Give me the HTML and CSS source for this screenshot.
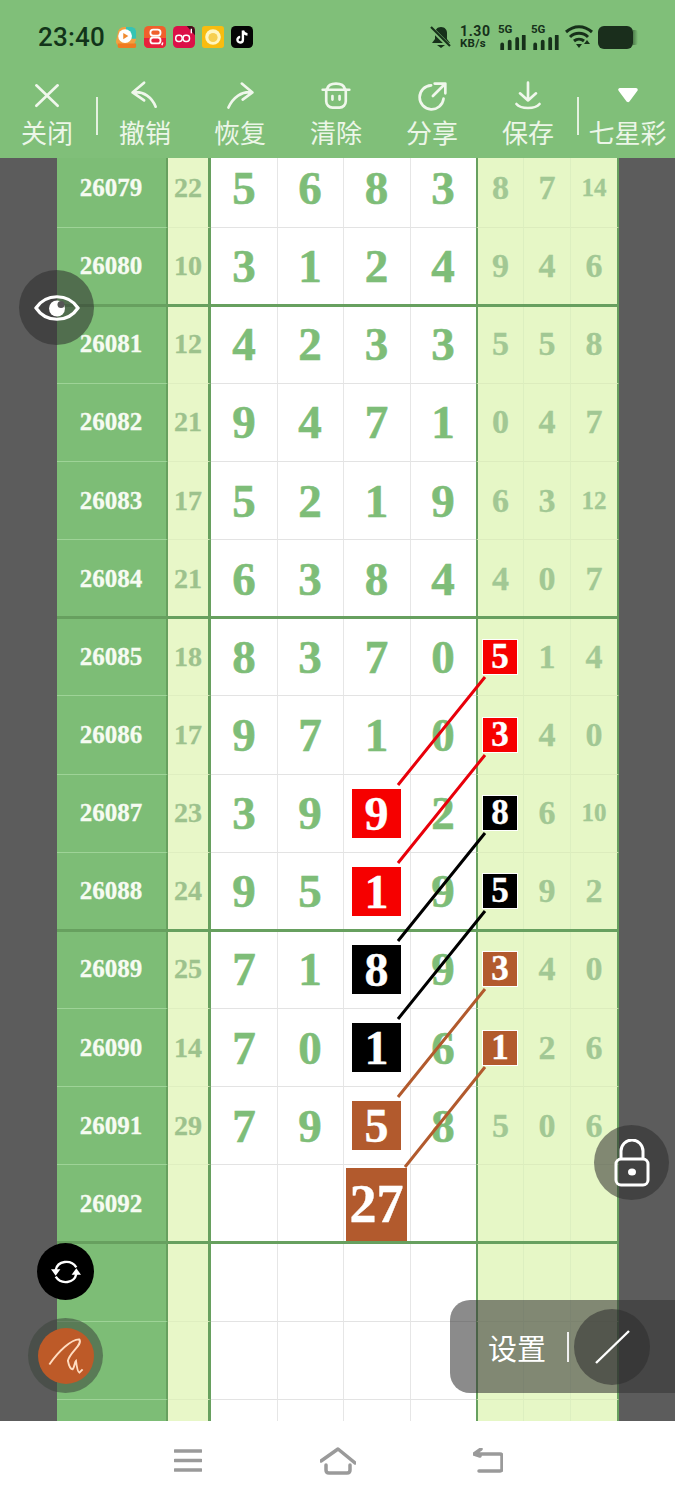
FILE: index.html
```html
<!DOCTYPE html>
<html lang="zh">
<head>
<meta charset="utf-8">
<title>七星彩</title>
<link rel="stylesheet" href="styles.css">
</head>
<body>
<div class="screen">
  <header class="head">
    <div class="status">
      <span class="time">23:40</span>
      <div class="apps">
        <svg class="app" viewBox="0 0 24 24"><path d="M3 8a7 7 0 0 1 7-7h8a5 5 0 0 1 5 5v8a8 8 0 0 1-2 5l2 3H6a5 5 0 0 1-5-5z" fill="#f3a040"/><path d="M12 1h6a5 5 0 0 1 5 5v8H12z" fill="#35c4b4"/><circle cx="11" cy="11" r="7.500" fill="#fff"/><path d="M9 7.500l5.500 3.500L9 14.500z" fill="#f08a30"/><path d="M3 19h20v3a2 2 0 0 1-2 2H5a2 2 0 0 1-2-2z" fill="#f07a20"/></svg>
        <svg class="app" viewBox="0 0 24 24"><rect width="24" height="24" rx="5" fill="#f0602c"/><path d="M0 13h24v6a5 5 0 0 1-5 5H5a5 5 0 0 1-5-5z" fill="#e8203c"/><rect x="7" y="4" width="11" height="6.500" rx="3" fill="none" stroke="#fff" stroke-width="2"/><rect x="7" y="12.500" width="11" height="6.500" rx="3" fill="none" stroke="#fff" stroke-width="2"/><path d="M20.500 18l-1 3" stroke="#fff" stroke-width="1.600"/></svg>
        <svg class="app" viewBox="0 0 24 24"><rect width="24" height="24" rx="5" fill="#dc1048"/><path d="M15 0h4a5 5 0 0 1 5 5v5z" fill="#40101c"/><rect x="3" y="10" width="7" height="7" rx="3" fill="none" stroke="#fff" stroke-width="1.600"/><rect x="11" y="10" width="7" height="7" rx="3" fill="none" stroke="#fff" stroke-width="1.600"/><path d="M20 3v5" stroke="#fff" stroke-width="1.500"/></svg>
        <svg class="app" viewBox="0 0 24 24"><rect width="24" height="24" rx="3" fill="#f8bc10"/><circle cx="12" cy="12" r="8.500" fill="#fff6c0"/><circle cx="12" cy="12.500" r="5" fill="#f6cf50"/></svg>
        <svg class="app" viewBox="0 0 24 24"><rect width="24" height="24" rx="5" fill="#050505"/><path d="M13 5v10a3 3 0 1 1-3-3M13 5c.5 2.500 2 4 5 4.300" fill="none" stroke="#fff" stroke-width="2.600"/></svg>
      </div>
      <div class="sys">
        <svg class="bell" viewBox="0 0 22 24"><path d="M11 2C7 2 5 5 5 8v6l-3 4h18l-3-4V8c0-3-2-6-6-6zM7 20h8l-4 3z" fill="#16301a"/><path d="M1 3l19 19" stroke="#80bf79" stroke-width="4.500"/><path d="M1 2l19 19" stroke="#16301a" stroke-width="2.200"/></svg>
        <div class="rate"><span class="rate-num">1.30</span><span class="rate-unit">KB/s</span></div>
        <div class="net"><span class="g5">5G</span><svg class="bars" viewBox="0 0 28 16"><path d="M1 10a1.500 1.500 0 0 1 4 0v6H1zM9 7a1.500 1.500 0 0 1 4 0v9H9zM17 4a1.500 1.500 0 0 1 4 0v12h-4zM24 1a1.500 1.500 0 0 1 4 0v15h-4z" fill="#16301a"/></svg></div>
        <div class="net"><span class="g5">5G</span><svg class="bars" viewBox="0 0 28 16"><path d="M1 10a1.500 1.500 0 0 1 4 0v6H1zM9 7a1.500 1.500 0 0 1 4 0v9H9zM17 4a1.500 1.500 0 0 1 4 0v12h-4zM24 1a1.500 1.500 0 0 1 4 0v15h-4z" fill="#16301a"/></svg></div>
        <svg class="wifi" viewBox="0 0 28 24"><path d="M1 7c8-7 18-7 26 0M5 12c5-5 13-5 18 0M9 16c3-2.500 7-2.500 10 0" fill="none" stroke="#16301a" stroke-width="3"/><path d="M11 19h6l-3 4z" fill="#16301a"/><path d="M22 15l3 4h-6z" fill="#16301a"/></svg>
        <div class="batt"><span class="batt-fill"></span><span class="batt-tip"></span></div>
      </div>
    </div>
    <nav class="tools">
      <div class="tool"><svg class="ti" viewBox="0 0 36 36"><path d="M6 6l24 23M30 6L6 29"/></svg><span>关闭</span></div>
      <div class="tool sep-l"><svg class="ti" viewBox="0 0 36 36"><path d="M17 3L4 14l13 9M4 14c13-2 22 6 26 16"/></svg><span>撤销</span></div>
      <div class="tool"><svg class="ti" viewBox="0 0 36 36"><path d="M20 4l12 10-11 8M32 14C20 12 10 20 5 31"/></svg><span>恢复</span></div>
      <div class="tool"><svg class="ti" viewBox="0 0 36 36"><path d="M7 11v13a7 7 0 0 0 7 7h8a7 7 0 0 0 7-7V11"/><path d="M3 11h30M8 10c2-8 18-8 20 0M14 18v4M22 18v4"/></svg><span>清除</span></div>
      <div class="tool"><svg class="ti" viewBox="0 0 36 36"><path d="M17 6a13.500 13.500 0 1 0 14 15"/><path d="M21 4h12v11M32 5L19 18"/></svg><span>分享</span></div>
      <div class="tool"><svg class="ti" viewBox="0 0 36 36"><path d="M18 3v20M9 15l9 8 9-8M5 27c5 6 21 6 26 0"/></svg><span>保存</span></div>
      <div class="tool sep-r"><svg class="ti" viewBox="0 0 36 36"><path class="solid" d="M9 11h18l-9 12z"/></svg><span>七星彩</span></div>
    </nav>
  </header>

  <main class="board">
    <div class="rows">
      <div class="row"><b class="id">26079</b><i class="sum">22</i><em class="d">5</em><em class="d">6</em><em class="d">8</em><em class="d">3</em><s class="r">8</s><s class="r">7</s><s class="r sm">14</s></div>
      <div class="row end"><b class="id">26080</b><i class="sum">10</i><em class="d">3</em><em class="d">1</em><em class="d">2</em><em class="d">4</em><s class="r">9</s><s class="r">4</s><s class="r">6</s></div>
      <div class="row"><b class="id">26081</b><i class="sum">12</i><em class="d">4</em><em class="d">2</em><em class="d">3</em><em class="d">3</em><s class="r">5</s><s class="r">5</s><s class="r">8</s></div>
      <div class="row"><b class="id">26082</b><i class="sum">21</i><em class="d">9</em><em class="d">4</em><em class="d">7</em><em class="d">1</em><s class="r">0</s><s class="r">4</s><s class="r">7</s></div>
      <div class="row"><b class="id">26083</b><i class="sum">17</i><em class="d">5</em><em class="d">2</em><em class="d">1</em><em class="d">9</em><s class="r">6</s><s class="r">3</s><s class="r sm">12</s></div>
      <div class="row end"><b class="id">26084</b><i class="sum">21</i><em class="d">6</em><em class="d">3</em><em class="d">8</em><em class="d">4</em><s class="r">4</s><s class="r">0</s><s class="r">7</s></div>
      <div class="row"><b class="id">26085</b><i class="sum">18</i><em class="d">8</em><em class="d">3</em><em class="d">7</em><em class="d">0</em><s class="r"><u class="bs red">5</u></s><s class="r">1</s><s class="r">4</s></div>
      <div class="row"><b class="id">26086</b><i class="sum">17</i><em class="d">9</em><em class="d">7</em><em class="d">1</em><em class="d">0</em><s class="r"><u class="bs red">3</u></s><s class="r">4</s><s class="r">0</s></div>
      <div class="row"><b class="id">26087</b><i class="sum">23</i><em class="d">3</em><em class="d">9</em><em class="d"><u class="bm red">9</u></em><em class="d">2</em><s class="r"><u class="bs blk">8</u></s><s class="r">6</s><s class="r sm">10</s></div>
      <div class="row end"><b class="id">26088</b><i class="sum">24</i><em class="d">9</em><em class="d">5</em><em class="d"><u class="bm red">1</u></em><em class="d">9</em><s class="r"><u class="bs blk">5</u></s><s class="r">9</s><s class="r">2</s></div>
      <div class="row"><b class="id">26089</b><i class="sum">25</i><em class="d">7</em><em class="d">1</em><em class="d"><u class="bm blk">8</u></em><em class="d">9</em><s class="r"><u class="bs brn">3</u></s><s class="r">4</s><s class="r">0</s></div>
      <div class="row"><b class="id">26090</b><i class="sum">14</i><em class="d">7</em><em class="d">0</em><em class="d"><u class="bm blk">1</u></em><em class="d">6</em><s class="r"><u class="bs brn">1</u></s><s class="r">2</s><s class="r">6</s></div>
      <div class="row"><b class="id">26091</b><i class="sum">29</i><em class="d">7</em><em class="d">9</em><em class="d"><u class="bm brn">5</u></em><em class="d">8</em><s class="r">5</s><s class="r">0</s><s class="r">6</s></div>
      <div class="row end"><b class="id">26092</b><i class="sum"></i><em class="d"></em><em class="d"></em><em class="d"><u class="bl brn">27</u></em><em class="d"></em><s class="r"></s><s class="r"></s><s class="r"></s></div>
      <div class="row"><b class="id"></b><i class="sum"></i><em class="d"></em><em class="d"></em><em class="d"></em><em class="d"></em><s class="r"></s><s class="r"></s><s class="r"></s></div>
      <div class="row"><b class="id"></b><i class="sum"></i><em class="d"></em><em class="d"></em><em class="d"></em><em class="d"></em><s class="r"></s><s class="r"></s><s class="r"></s></div>
      <div class="row"><b class="id"></b><i class="sum"></i><em class="d"></em><em class="d"></em><em class="d"></em><em class="d"></em><s class="r"></s><s class="r"></s><s class="r"></s></div>
    </div>
    <svg class="links" viewBox="0 158 675 1263">
      <path class="l-red" d="M485 677L398 785M485 755L398 863"/>
      <path class="l-blk" d="M485 833L398 941M485 911L398 1019"/>
      <path class="l-brn" d="M485 989L398 1097M485 1067L405 1167"/>
    </svg>
  </main>

  <footer class="nav">
    <svg class="nv-menu" viewBox="0 0 28 24"><path d="M1 3h26M1 12.500h26M1 22h26"/></svg>
    <svg class="nv-home" viewBox="0 0 36 28"><path d="M1 14L18 2l17 14M6 18v5q0 3 3 3h18q3 0 3-3v-5"/></svg>
    <svg class="nv-back" viewBox="0 0 30 26"><path d="M1 6h26q2 0 2 2v13q0 2-2 2H6M8 1L1 6l6 2"/></svg>
  </footer>

  <div class="fab eye"><svg viewBox="0 0 46 32"><path d="M2 16C12 1 34 1 44 16 34 31 12 31 2 16z" fill="none" stroke="#fff" stroke-width="3.200"/><circle cx="23" cy="16.500" r="8" fill="#fff"/><circle cx="27" cy="12.500" r="3.500" fill="#555"/></svg></div>
  <div class="fab lock"><svg viewBox="0 0 36 48"><path d="M7 20V12a11 11 0 0 1 22 0v8" fill="none" stroke="#fff" stroke-width="3"/><rect x="2" y="20" width="32" height="26" rx="5" fill="none" stroke="#fff" stroke-width="3"/><ellipse cx="18" cy="33" rx="4" ry="3.500" fill="#fff"/></svg></div>
  <div class="sync"><svg viewBox="0 0 32 32"><path d="M5 14C7 4 21 2 27 11M27 18C25 28 11 30 5 21" fill="none" stroke="#fff" stroke-width="2.600"/><path d="M0 13l10 0-5 7zM32 19l-10 0 5-7z" fill="#fff"/></svg></div>
  <div class="pen"><span class="pen-in"><svg viewBox="0 0 40 40"><path d="M2.500 29C12 15 26 2 34 2.500 38 8 24 16 22 25 23 30 25 34 27 34 29 32 29 26 30.500 25 31 29 32 37 34 37.500L37.500 34" fill="none" stroke="#ffdcc0" stroke-width="2"/></svg></span></div>
  <div class="panel">
    <span class="panel-txt">设置</span>
    <span class="panel-bar"></span>
    <span class="panel-btn"><svg viewBox="0 0 36 36"><path d="M2 34L35 2" stroke="#fff" stroke-width="2.400"/></svg></span>
  </div>
</div>
</body>
</html>
```
FILE: styles.css
```css
* { box-sizing: border-box; }
html, body { margin: 0; padding: 0; background: #fff; }
.screen {
  position: relative;
  width: 675px;
  height: 1500px;
  overflow: hidden;
  display: flex;
  flex-direction: column;
  font-family: "Noto Sans CJK SC", "Noto Sans", sans-serif;
}

/* header */
.head { height: 158px; background: #80bf79; flex: none; }
.status { height: 74px; display: flex; align-items: center; padding: 0 37px 0 38px; }
.time { font: 500 26px/1 Roboto, sans-serif; color: #12341a; letter-spacing: .2px; width: 77px; }
.apps { display: flex; gap: 7px; }
.app { width: 22px; height: 22px; display: block; }
.sys { margin-left: auto; display: flex; align-items: center; }
.bell { width: 22px; height: 24px; margin-right: 8px; }
.rate { display: flex; flex-direction: column; width: 32px; color: #16301a; font-family: Roboto, sans-serif; font-weight: 700; line-height: 1; margin-right: 6px; }
.rate-num { font-size: 14px; letter-spacing: .6px; }
.rate-unit { font-size: 11.5px; letter-spacing: .3px; }
.net { width: 28px; height: 24px; position: relative; margin-right: 5px; }
.g5 { position: absolute; left: 0; top: -1px; font: 700 11.5px/1 Roboto, sans-serif; color: #16301a; }
.bars { position: absolute; left: 1px; bottom: -1px; width: 27px; height: 15px; }
.wifi { width: 28px; height: 24px; margin: 0 5px 0 1px; }
.batt { width: 40px; height: 23px; display: flex; align-items: center; }
.batt-fill { width: 35px; height: 23px; background: #1a2e1c; border-radius: 6px; }
.batt-tip { width: 5px; height: 15px; background: linear-gradient(90deg, #4e7d4b, #80bf79); border-radius: 0 3px 3px 0; }

.tools { display: grid; grid-template-columns: 94px 102px 88px 104px 88px 104px 95px; height: 84px; }
.tool { position: relative; display: flex; flex-direction: column; align-items: center; color: #ecf6e8; font-size: 26px; line-height: 36px; }
.ti { width: 32px; height: 32px; margin-top: 6px; margin-bottom: 6px; fill: none; stroke: #f0f7ec; stroke-width: 3; stroke-linecap: round; stroke-linejoin: round; }
.ti .solid { fill: #fff; stroke: #fff; stroke-width: 4; }
.tool span { display: block; margin-top: -4px; white-space: nowrap; }
.sep-l::before, .sep-r::before { content: ""; position: absolute; top: 23px; width: 2px; height: 38px; background: #e4f1e0; }
.sep-l::before { left: 2px; }
.sep-r::before { left: -3px; }

/* board */
.board { position: relative; z-index: 0; flex: 1; overflow: hidden; background: #5c5c5c; padding: 0 56px 0 57px; }
.rows { margin-top: -8.5px; }
.row {
  position: relative;
  display: grid;
  grid-template-columns: 111px 43px 66px 66px 67px 66px 48px 47px 48px;
  height: 78.15px;
}
.row > * {
  display: flex;
  align-items: center;
  justify-content: center;
  font-family: "Liberation Serif", serif;
  font-weight: 700;
  font-style: normal;
  text-decoration: none;
  border-bottom: 1px solid #e3e3e3;
}
.row.end::after { content: ""; position: absolute; z-index: 1; left: 0; right: 0; bottom: -1px; height: 3px; background: #67a05f; }
.id { background: #7dbd76; color: #f6fbf2; font-size: 25px; border-right: 2px solid #67a05f; border-bottom-color: #9ed397 !important; padding-right: 1px; -webkit-text-stroke: .3px #f6fbf2; }
.sum { background: #e8f7c8; color: #9dc28d; font-size: 28px; border-right: 3px solid #67a05f; border-bottom-color: #dfeec0 !important; -webkit-text-stroke: .3px #9dc28d; }
.d { background: #fff; color: #7ebd78; font-size: 47px; -webkit-text-stroke: .6px #7ebd78; }
.d + .d { border-left: 1px solid #e6e6e6; padding-right: 1px; }
.r { background: #e6f7c6; color: #a2c894; font-size: 34px; border-right: 1px solid #dcefc0; border-bottom-color: #dcecbd !important; -webkit-text-stroke: .3px #a2c894; }
.r:nth-child(7) { border-left: 2px solid #67a05f; }
.r:nth-child(9) { border-right: 2px solid #67a05f; }
.r.sm { font-size: 25px; }

.bs, .bm, .bl { display: flex; align-items: center; justify-content: center; text-decoration: none; color: #fff; -webkit-text-stroke: .4px #fff; }
.bs { width: 34px; height: 34px; font-size: 35px; outline: 1.500px solid #fff; margin-right: 1px; }
.bm { width: 49px; height: 49px; font-size: 48px; }
.bl { width: 61px; height: 73px; font-size: 54px; margin-top: 1px; }
.red { background: #f60000; }
.blk { background: #000; }
.brn { background: #b25a2d; }
.links { position: absolute; z-index: 2; left: 0; top: 0; width: 675px; height: 1263px; pointer-events: none; }
.links path { fill: none; stroke-width: 3; }
.l-red { stroke: #e8000a; }
.l-blk { stroke: #000; }
.l-brn { stroke: #b25a2d; }

/* bottom nav */
.nav { height: 79px; flex: none; background: #fff; position: relative; }
.nav svg { position: absolute; fill: none; stroke: #9a9a9a; stroke-width: 3.500; stroke-linecap: round; stroke-linejoin: round; }
.nv-menu { left: 174px; top: 27px; width: 28px; height: 24px; }
.nv-home { left: 320px; top: 26px; width: 36px; height: 28px; }
.nv-back { left: 473px; top: 27px; width: 30px; height: 26px; }

/* floating controls */
.fab { position: absolute; width: 75px; height: 75px; border-radius: 50%; background: rgba(45, 45, 45, .55); display: flex; align-items: center; justify-content: center; }
.eye { left: 19px; top: 270px; }
.eye svg { width: 46px; height: 32px; }
.lock { left: 594px; top: 1125px; }
.lock svg { width: 36px; height: 48px; }
.sync { position: absolute; left: 37px; top: 1243px; width: 57px; height: 57px; border-radius: 50%; background: #000; display: flex; align-items: center; justify-content: center; }
.sync svg { width: 30px; height: 30px; }
.pen { position: absolute; left: 28px; top: 1318px; width: 75px; height: 75px; border-radius: 50%; background: rgba(60, 70, 60, .55); display: flex; align-items: center; justify-content: center; }
.pen-in { width: 56px; height: 56px; border-radius: 50%; background: #bd5a28; display: flex; align-items: center; justify-content: center; }
.pen-in svg { width: 38px; height: 38px; }
.panel { position: absolute; left: 450px; top: 1300px; width: 225px; height: 93px; border-radius: 20px 0 0 20px; background: rgba(55, 55, 55, .58); display: flex; align-items: center; padding-left: 38px; color: #fff; font-size: 29px; }
.panel-bar { width: 2px; height: 30px; background: #f0f0f0; margin-left: 21px; }
.panel-btn { width: 76px; height: 76px; border-radius: 50%; background: rgba(45, 45, 45, .55); margin-left: 5px; display: flex; align-items: center; justify-content: center; }
.panel-btn svg { width: 36px; height: 36px; }
```
